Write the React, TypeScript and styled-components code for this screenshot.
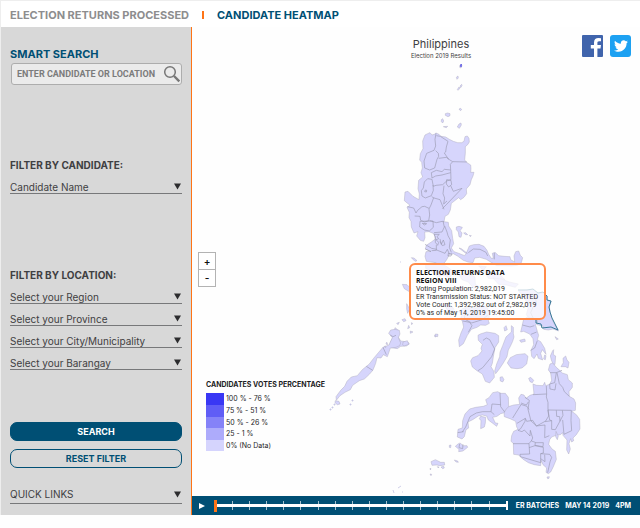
import React from "react";
import styled, { createGlobalStyle } from "styled-components";
import { FaTwitter } from "react-icons/fa";

const NAVY = "#004f74";
const ORANGE = "#ff7416";
const INK = "#3f4042";

const GlobalStyle = createGlobalStyle`
  * { box-sizing: border-box; }
  body { margin: 0; background: #fefefe; }
  body, button, input, select { font-family: Inter, "Open Sans", sans-serif; }
`;

const Page = styled.div`
  border-top: 1px solid #eeeeee;
  border-left: 1px solid #eeeeee;
`;

const Header = styled.nav`
  display: flex;
  align-items: center;
  gap: 13px;
  height: 26px;
  padding: 2px 9px 0;
  background: #fff;
`;

const NavLink = styled.a<{ $active?: boolean }>`
  color: ${(p) => (p.$active ? NAVY : "#8d8d8e")};
  font-size: 11px;
  line-height: 14px;
  font-weight: 700;
  text-decoration: none;
`;

const Divider = styled.span`
  width: 2px;
  height: 8px;
  background: ${ORANGE};
`;

const Body = styled.div`
  display: grid;
  grid-template-columns: 191px minmax(0, 1fr);
`;

const Sidebar = styled.aside`
  display: flex;
  flex-direction: column;
  padding: 20px 9px 10px;
  background: #d8d8d8;
  border-right: 1px solid ${ORANGE};
`;

const SearchLabel = styled.label`
  color: ${NAVY};
  font-size: 11px;
  line-height: 14px;
  font-weight: 700;
`;

const SearchBox = styled.div`
  display: flex;
  align-items: center;
  height: 22px;
  margin: 2px 0 73px 1px;
  padding: 0 0 0 5px;
  background: #ebebeb;
  border: 1px solid #adadad;
  border-radius: 3px;
`;

const SearchInput = styled.input`
  flex: 1;
  min-width: 0;
  padding: 0;
  border: 0;
  outline: 0;
  background: transparent;
  color: #7b7b7b;
  font-family: Roboto, sans-serif;
  font-size: 9px;
  line-height: 12px;
  font-weight: 700;
  &::placeholder { color: #7b7b7b; opacity: 1; }
`;

const IconButton = styled.button`
  display: flex;
  padding: 0;
  border: 0;
  background: transparent;
  color: #fff;
`;

const FilterGroup = styled.fieldset<{ $after: number }>`
  display: flex;
  flex-direction: column;
  gap: 4px;
  min-width: 0;
  margin: 0 0 ${(p) => p.$after}px;
  padding: 0;
  border: 0;
`;

const Legend = styled.legend`
  padding: 0;
  margin-bottom: 4px;
  color: ${INK};
  font-size: 10px;
  line-height: 14px;
  font-weight: 700;
`;

const SelectRow = styled.div<{ $roomy?: boolean }>`
  display: flex;
  align-items: center;
  height: ${(p) => (p.$roomy ? 20 : 18)}px;
  padding: ${(p) => (p.$roomy ? "2px 1px 1px 0" : "4px 1px 0 0")};
  border-bottom: 1px solid #77787a;
`;

const Select = styled.select`
  flex: 1;
  min-width: 0;
  padding: 0;
  border: 0;
  outline: 0;
  appearance: none;
  background: transparent;
  color: ${INK};
  font-size: 10px;
  line-height: 14px;
`;

const Button = styled.button<{ $filled?: boolean }>`
  height: 19px;
  padding: 0;
  margin-bottom: 8px;
  border: 1px solid ${NAVY};
  border-radius: 7px;
  background: ${(p) => (p.$filled ? NAVY : "transparent")};
  color: ${(p) => (p.$filled ? "#fff" : NAVY)};
  font-size: 9px;
  line-height: 14px;
  font-weight: 700;
`;

const QuickLinks = styled.div`
  margin-top: 8px;
`;

const Main = styled.main`
  display: flex;
  flex-direction: column;
  min-width: 0;
`;

const MapArea = styled.section`
  position: relative;
  flex: 1;
`;

const MapSvg = styled.svg`
  display: block;
  width: 100%;
`;

const MapTitle = styled.header`
  position: absolute;
  top: 11px;
  left: 0;
  right: 0;
  padding-left: 50px;
  color: ${INK};
  text-align: center;
`;

const Title = styled.h1`
  margin: 0;
  font-size: 11px;
  line-height: 13px;
  font-weight: 400;
`;

const Subtitle = styled.p`
  margin: 0;
  font-size: 6px;
  line-height: 9px;
`;

const Social = styled.div`
  position: absolute;
  top: 8px;
  right: 9px;
  display: flex;
  gap: 7px;
`;

const SocialLink = styled.a<{ $color: string; $radius: number }>`
  display: flex;
  align-items: center;
  justify-content: center;
  width: 21px;
  height: 22px;
  background: ${(p) => p.$color};
  border-radius: ${(p) => p.$radius}px;
  color: #fff;
`;

const Zoom = styled.div`
  position: absolute;
  top: 225px;
  left: 6px;
  width: 18px;
  border: 1px solid #b3b3b3;
  background: #fff;
`;

const ZoomButton = styled.button`
  display: block;
  width: 100%;
  height: 16px;
  padding: 0;
  border: 0;
  background: transparent;
  color: #111;
  font-size: 10px;
  line-height: 14px;
  font-weight: 600;
  & + & { height: 17px; border-top: 1px solid #b3b3b3; }
`;

const Key = styled.section`
  position: absolute;
  top: 353px;
  left: 14px;
  color: #1d1d1f;
`;

const KeyTitle = styled.h2`
  margin: 0 0 4px;
  font-size: 7px;
  line-height: 9px;
  font-weight: 700;
`;

const KeyList = styled.ul`
  margin: 0;
  padding: 0;
  list-style: none;
`;

const KeyItem = styled.li<{ $color: string }>`
  display: flex;
  align-items: center;
  gap: 2px;
  font-size: 7px;
  line-height: 12px;
  &::before {
    content: "";
    width: 18px;
    height: 12px;
    background: ${(p) => p.$color};
  }
  &:nth-child(3)::before, &:nth-child(5)::before { height: 11px; }
  &:nth-child(3), &:nth-child(5) { line-height: 11px; }
`;

const Tooltip = styled.div`
  position: absolute;
  top: 236px;
  left: 217px;
  width: 137px;
  padding: 4px 0 1px 5px;
  border: 2px solid #ff8b49;
  border-radius: 6px;
  background: rgba(255, 255, 255, 0.74);
  color: #2b2b2b;
  font-family: Roboto, sans-serif;
  font-size: 7px;
  line-height: 8px;
  white-space: nowrap;
`;

const TooltipHead = styled.strong`
  display: block;
  color: #111;
  font-family: "Open Sans", sans-serif;
  font-weight: 700;
`;

const Timeline = styled.footer`
  display: flex;
  align-items: center;
  gap: 6px;
  height: 19px;
  padding: 0 9px 0 7px;
  background: ${NAVY};
  color: #fff;
  font-size: 7px;
  line-height: 10px;
  font-weight: 700;
  white-space: nowrap;
`;

const Track = styled.div`
  position: relative;
  display: flex;
  flex: 1;
  min-width: 0;
  height: 13px;
  margin: 0 2px 0 3px;
`;

const Ticks = styled.div`
  position: absolute;
  inset: 2px 0 2px 1px;
  display: flex;
  justify-content: space-between;
`;

const Tick = styled.span`
  width: 1px;
  background: #a5c0cd;
  &:last-child { width: 2px; background: #fff; }
`;

const Range = styled.input`
  position: relative;
  width: 100%;
  height: 13px;
  margin: 0;
  appearance: none;
  background: linear-gradient(#fff, #fff) center / 100% 3px no-repeat;
  &::-webkit-slider-thumb {
    appearance: none;
    width: 3px;
    height: 12px;
    background: ${ORANGE};
  }
`;

const Dates = styled.div`
  display: flex;
  gap: 6px;
`;

const Arrow = () => (
  <svg width="7" height="7" viewBox="0 0 7 7" aria-hidden="true">
    <path d="M0 .5H7L3.5 6.5Z" fill="#2c2c2e" />
  </svg>
);

const Dropdown = ({ label, roomy }: { label: string; roomy?: boolean }) => (
  <SelectRow $roomy={roomy}>
    <Select aria-label={label} defaultValue="">
      <option value="">{label}</option>
    </Select>
    <Arrow />
  </SelectRow>
);

/* Each map sheet is drawn on its own grid, three units to one map unit. */
type Sheet = { x: number; y: number; land: string[]; borders?: string };

const sheets: Sheet[] = [
  {
    x: 400, y: 30,
    land: [
      "M179 107l4-4 3 4-3 7-4-2z",
      "M169 142l5-4 1 6-4 4z",
      "M172 179l4-7 4 1-2 4-4 4z",
      "M180 168l5-5 1 4-4 6z",
      "M177 237l5-2 3 4-4 3z",
      "M136 251l7-2 7 2 0 6-6 3-8-4z",
      "M124 269l4-3 3 7-3 6-4-4z",
      "M130 290l13-1-4 4z",
      "M172 291l5-9 6-3 1 6-6 10z",
    ],
  },
  {
    x: 390, y: 110,
    land: [
      "M105 75L113 71 120 68 126 75 133 73 138 69 147 73 153 79 167 81 178 88 190 94 203 98 215 98 222 94 225 80 232 78 237 85 238 96 233 104 226 110 226 130 224 150 231 158 242 165 243 176 242 187 252 187 249 198 244 209 240 224 229 237 230 251 222 262 212 269 206 263 184 280 181 300 175 313 165 319 162 335 175 337 176 348 185 362 188 385 191 401 184 414 192 425 206 430 224 437 230 427 238 408 251 404 267 403 282 409 291 421 296 433 304 445 310 445 307 430 315 427 326 437 342 439 360 440 362 449 374 456 372 438 377 425 386 423 391 436 398 443 394 458 382 466 361 468 340 467 320 467 305 458 289 448 269 442 254 444 249 458 234 456 220 451 204 439 190 431 178 434 170 449 162 460 143 463 132 457 109 454 105 439 108 425 123 424 106 417 109 406 124 396 136 387 132 371 117 365 104 366 105 383 101 394 91 391 80 378 84 365 72 369 64 351 63 334 57 323 58 307 51 292 60 286 43 272 45 246 54 244 69 259 87 269 88 252 84 236 86 211 98 201 93 188 97 174 95 157 89 150 91 131 99 116 98 93Z",
      "M199 351l8-2 10 3-3 6-4 4 6 7-3 13-6-2-2-14-6-7z",
      "M221 369l6-1 6 6-6 0z", "M238 376l6 1-3 3z",
      "M207 414l7 2 18 14-7-2z",
      "M64 443l8 1 9 8-6 2z",
    ],
    borders:
      "M138 70L135 88 137 108 132 121 110 130 102 153 104 174 119 180 134 174 141 148 146 139 145 130 137 122M139 77L151 79 174 94 169 111 167 126 163 129 175 147 188 155 231 156M146 145L169 142 177 148M188 155L181 163 182 180 163 178 156 185 139 181 124 188 126 204 137 198 156 195 182 188M182 180L183 209 170 213 158 224 138 226 130 229 126 208 113 206 103 216 100 234 94 242 96 258 106 264 124 257 130 241 129 225M170 209L183 211 185 224 176 231 169 222zM182 227L190 244 216 235 170 283 157 296M162 227L159 251 164 264 161 282 171 273M125 260L132 264 150 269 162 298M131 263L123 285 117 297 119 315 116 332 104 336 92 331 90 319 74 318M52 290L71 294 78 309 83 301 96 290 104 289 117 295M90 334L89 351 103 360 118 363 130 352 129 333zM119 332L139 338 157 334 162 336M97 340l13 1-7 4zM106 240l4 1-1 5-5-1zM132 368L156 366 163 351 159 333M132 373L148 373 141 380 146 386 138 389 146 397 143 406 136 397 136 380zM150 387l4 16 6-13 5 14-8 3-7-13M139 405L139 421 125 422M105 403L125 415 140 418M140 420L165 430 172 418 178 432M164 348L171 366 174 377 181 390 178 412 184 427M175 430l11 2-3 6-9 0zM235 428L250 417 270 418 288 427 293 438M313 429L313 448M106 417L123 425",
  },
  {
    x: 395, y: 225,
    land: [
      "M22 178l14 1 12 12-7 8-13-8z",
      "M92 116l30-2 31 9 23 17-12 18-20-8-16 6-17-16-19-10z",
      "M191 147l29-1 20 10 1 22 12 7-17 5-16-19-19-7z",
      "M251 123l23 2-8 9 18 8 27 4 19 18-10 8-22-10-18-2-8-16z",
      "M294 159l25 3 24 9 27 6-9 10-27-7-23-2z",
      "M153 235l14 5 10 13-12 15-12-20z",
      "M190 260L204 250 223 245 242 249 266 241 277 248 283 270 280 288 283 295 272 301 257 300 246 307 229 313 217 331 205 356 193 365 191 345 198 324 206 306 202 289 197 280 202 266z",
      "M256 327L275 321 300 325 311 332 311 351 300 368 295 395 292 415 288 425 297 440 298 457 284 474 271 469 262 447 246 437 232 426 227 408 233 398 249 392 261 378 258 370 262 358 250 346 249 331z",
      "M349 302l6 5 0 19 2 10-4 13-7 15-6 11-4 20-11 19-12 18-11 14-3-8 6-21 9-22 1-13 8-20 10-26 16-15 0-12z",
      "M337 414L346 398 364 389 390 386 399 394 395 417 381 429 366 431 348 429z",
      "M370 197L397 195 414 194 429 205 444 203 457 214 456 226 469 229 463 246 466 263 470 280 477 295 491 318 474 312 460 315 446 313 444 303 426 299 427 285 413 278 404 281 394 269 399 251 395 231 385 215z",
      "M382 300L385 286 396 276 413 280 427 288 422 301 427 319 431 331 427 344 437 350 449 370 453 388 442 374 437 385 443 405 430 400 426 387 417 401 410 394 408 376 416 359 414 341 404 327 386 319 377 321z",
      "M374 346l15-4 2 7-13 3z", "M327 308l6-6 4 12-8 4z",
      "M449 390l4 2-2 12-5-2z", "M466 393l7-16 3-3-1 15 7 4-2 25-5 1-6-14z",
      "M478 430l-1 12-5-5z", "M504 400l8-7 4 12 6 7-3 17-8-4-13 0 7-12z",
      "M480 335l10 7-5 2z", "M315 457l7-2 5 9-4 7-7-3z", "M401 460l6-3 9 9-4 7-7-3z",
      "M0 308L8 314 4 326 17 348 39 351 43 357 34 363 17 364 7 371-18 367-14 352-6 337z",
      "M21 284l9-3 3 6-7 3z", "M5 295l8-3-4 7z",
      "M35 236l9 16-6 13-3-13z", "M119 331l5 1-1 4-4-1z", "M49 293l4 2-3 4z",
      "M41 301l3 7-6 3z", "M46 318l8 3-8 4z",
    ],
    borders:
      "M212 251L208 282 230 294 262 284 279 270M203 288L224 292 231 302 220 322M264 346L274 339 284 344 299 372 290 395 263 428 249 437M382 300L405 306 418 302M408 328L425 321M407 376L419 369 427 347M414 278L407 263 414 247 425 234 420 217",
  },
  {
    x: 320, y: 330,
    land: [
      "M206 10L212 0 225-2 238 1 240 12 235 23 242 39 239 47 228 52 211 54 207 66 202 80 190 74 183 84 171 83 167 100 159 120 148 133 133 147 118 152 98 166 91 179 75 187 60 197 49 211 48 200 62 181 74 169 81 154 94 141 112 137 127 119 148 102 160 86 175 68 189 52 207 45 217 23z",
      "M249 36l13-4 4 11-14 5-4-3z", "M46 212l11 2 3 8-8 2-7-6z",
      "M346 12l8 1-1 7-8-2z", "M198 39l3-2 2 7-4-1z", "M193 49l4-1 0 5z",
    ],
    borders: "M189 52L199 74M139 109L158 121M211 15L219 20 228 16",
  },
  {
    x: 430, y: 360,
    land: [
      "M360 12L368 9 379 22 389 31 397 39 412 44 415 59 427 69 427 82 417 95 418 109 432 117 437 129 436 151 425 154 439 164 449 178 450 207 439 224 429 234 431 242 425 246 422 236 417 251 421 267 416 282 410 270 411 240 399 226 398 218 391 224 378 226 365 231 359 239 356 253 366 267 376 274 379 298 370 320 362 336 355 341 348 337 350 324 339 314 333 301 332 317 313 314 295 308 278 297 266 285 251 283 250 250 243 244 245 227 251 214 264 208 260 201 257 184 240 176 223 170 222 157 232 141 251 135 269 133 266 114 273 103 282 105 288 115 300 106 312 102 309 72 320 76 339 77 344 67 347 77 359 73 365 61 362 39 355 30z",
      "M82 231L84 208 97 204 98 182 105 162 119 147 137 142 160 139 172 134 167 119 177 113 188 98 203 95 212 100 226 100 235 112 236 140 226 150 223 158 212 161 201 169 188 172 196 189 204 190 200 199 187 189 175 180 170 168 157 165 145 168 128 179 114 186 116 204 108 209 103 230 96 237z",
      "M152 169l15 3-1 17-3 12-11 5 1-24-5-6z",
      "M76 259L84 252 90 249 100 257 111 257 113 262 99 273 86 275 87 268z",
      "M3 305l13-6 16 8 11 0 1 8-15 2-8-2-15 1z",
      "M58 256l5-1-1 8-4-1z", "M73 300l10 3 2 4-7-1z", "M22 320l5 1-2 3z", "M33 321l8-2 2 5-5 2z", "M0 342l5 1-2 4z", "M0 325l3 1-2 4z",
      "M351 351l7-1-1 5-4 1z", "M378 214l7 14-3 11-5-9z",
    ],
    borders:
      "M360 38L379 38 396 31M379 38L374 68 359 72 360 87 375 90 378 70M381 38L388 71 398 82 403 95 418 109M309 104L350 102 349 78M350 102L349 111 354 127 354 150 424 151M354 150L356 168 347 183 320 198 303 183 294 148 298 121 285 112M273 129L289 135 295 126M272 133L291 139 297 149M248 174L263 150 273 134M424 151L423 181 425 212 402 223 398 180M354 150L359 180 365 182 365 208 376 209 387 189 399 166 397 151M379 151L380 169 389 170 390 184M261 190L286 175 285 184 272 206 264 211M286 175L290 184 308 181 319 198 345 195 344 233 358 227M345 185L365 182M264 211L276 215 283 210 300 228 301 211 308 234 304 243 316 247 315 256 339 260 340 248 316 248M249 251L297 251 304 242M297 251L299 282 270 283 271 290 332 308 332 281 340 279 340 262 315 257 297 263M332 281L359 283 365 292 360 306 353 338M332 296L345 305 344 284M210 98L212 140 224 156M212 134L186 132 183 155 158 155 139 159 120 170 107 201 97 216M183 155L193 164M83 218L101 215M89 252L87 263 98 266 99 253",
  },
];

const islandDust =
  "M352 400h1v1h-1zM350 404h1v1h-1zM334 404h1v1h-1zM332 407h1v1h-1zM330 409h1v1h-1zM393 490l1 3M398 488l3-2M402 492h1M400 262h1";

const PhilippinesMap = () => (
  <MapSvg viewBox="192 27 448 469" role="img" aria-label="Map of the Philippines by province">
    {sheets.map((s, i) => (
      <g key={i} transform={`translate(${s.x} ${s.y}) scale(0.33333)`} strokeLinejoin="round">
        {s.land.map((d, j) => (
          <path key={j} d={d} fill="#d6d5fc" stroke="#aaa9ba" strokeWidth="1.3" />
        ))}
        {s.borders && <path d={s.borders} fill="none" stroke="#9695ab" strokeWidth="1.8" />}
      </g>
    ))}
    <path d="M460.5 65l1-1-.5 3z" fill="#514de7" stroke="#6c68e5" />
    <path d={islandDust} fill="none" stroke="#bcbce0" strokeWidth=".7" />
    <path
      d="M518 290l9 0 6-1 5 4 5-1 4 4 0 4 4 1-2 6 1 5 2 6 6 12-7-3-9 1-1-4-5-1 0-4"
      fill="none" stroke="#377998" strokeWidth="1"
    />
  </MapSvg>
);

const keyItems = [
  { color: "#3937f4", text: "100 % - 76 %" },
  { color: "#605df6", text: "75 % - 51 %" },
  { color: "#8582f8", text: "50 % - 26 %" },
  { color: "#adabfb", text: "25 - 1 %" },
  { color: "#d5d4fd", text: "0% (No Data)" },
];

export default function App() {
  return (
    <>
      <GlobalStyle />
      <Page>
        <Header>
          <NavLink href="#processed">ELECTION RETURNS PROCESSED</NavLink>
          <Divider />
          <NavLink href="#heatmap" $active aria-current="page">CANDIDATE HEATMAP</NavLink>
        </Header>
        <Body>
          <Sidebar>
            <SearchLabel htmlFor="search">SMART SEARCH</SearchLabel>
            <SearchBox>
              <SearchInput id="search" placeholder="ENTER CANDIDATE OR LOCATION" />
              <IconButton aria-label="Find">
                <svg width="18" height="18" viewBox="0 0 18 18" fill="none" stroke="#777">
                  <circle cx="7" cy="7" r="5.3" strokeWidth="1.5" />
                  <path d="M11 11L16.3 16.3" strokeWidth="2.4" />
                </svg>
              </IconButton>
            </SearchBox>
            <FilterGroup $after={74}>
              <Legend>FILTER BY CANDIDATE:</Legend>
              <Dropdown label="Candidate Name" />
            </FilterGroup>
            <FilterGroup $after={52}>
              <Legend>FILTER BY LOCATION:</Legend>
              <Dropdown label="Select your Region" />
              <Dropdown label="Select your Province" />
              <Dropdown label="Select your City/Municipality" />
              <Dropdown label="Select your Barangay" />
            </FilterGroup>
            <Button $filled>SEARCH</Button>
            <Button>RESET FILTER</Button>
            <QuickLinks>
              <Dropdown label="QUICK LINKS" roomy />
            </QuickLinks>
          </Sidebar>
          <Main>
            <MapArea>
              <PhilippinesMap />
              <MapTitle>
                <Title>Philippines</Title>
                <Subtitle>Election 2019 Results</Subtitle>
              </MapTitle>
              <Social>
                <SocialLink href="#facebook" aria-label="Facebook" $color="#4064ac" $radius={1}>
                  <svg width="21" height="22" viewBox="0 0 21 22">
                    <path d="M12 22V13.4H8.8V9.9H12V7.4C12 4.5 13.8 3 16.5 3L19 3.2V6.3H17.1C15.7 6.3 15.4 7 15.4 8V9.9H19L18.5 13.4H15.4V22Z" fill="#fff" />
                  </svg>
                </SocialLink>
                <SocialLink href="#twitter" aria-label="Twitter" $color="#1da1f2" $radius={3}>
                  <FaTwitter size={14} />
                </SocialLink>
              </Social>
              <Zoom>
                <ZoomButton aria-label="Zoom in">+</ZoomButton>
                <ZoomButton aria-label="Zoom out">-</ZoomButton>
              </Zoom>
              <Key>
                <KeyTitle>CANDIDATES VOTES PERCENTAGE</KeyTitle>
                <KeyList>
                  {keyItems.map((k) => (
                    <KeyItem key={k.text} $color={k.color}>{k.text}</KeyItem>
                  ))}
                </KeyList>
              </Key>
              <Tooltip role="tooltip">
                <TooltipHead>ELECTION RETURNS DATA</TooltipHead>
                <TooltipHead>REGION VIII</TooltipHead>
                <div>Voting Population: 2,982,019</div>
                <div>ER Transmission Status: NOT STARTED</div>
                <div>Vote Count: 1,392,982 out of 2,982,019</div>
                <div>0% as of May 14, 2019 19:45:00</div>
              </Tooltip>
            </MapArea>
            <Timeline>
              <IconButton aria-label="Play">
                <svg width="6" height="6" viewBox="0 0 6 6"><path d="M0 0L6 3 0 6Z" fill="#fff" /></svg>
              </IconButton>
              <Track>
                <Ticks>
                  {Array.from({ length: 18 }, (_, i) => <Tick key={i} />)}
                </Ticks>
                <Range type="range" min={0} max={17} defaultValue={0} aria-label="Batch time" />
              </Track>
              <Dates>
                <span>ER BATCHES</span>
                <span>MAY 14 2019</span>
                <span>4PM</span>
              </Dates>
            </Timeline>
          </Main>
        </Body>
      </Page>
    </>
  );
}
